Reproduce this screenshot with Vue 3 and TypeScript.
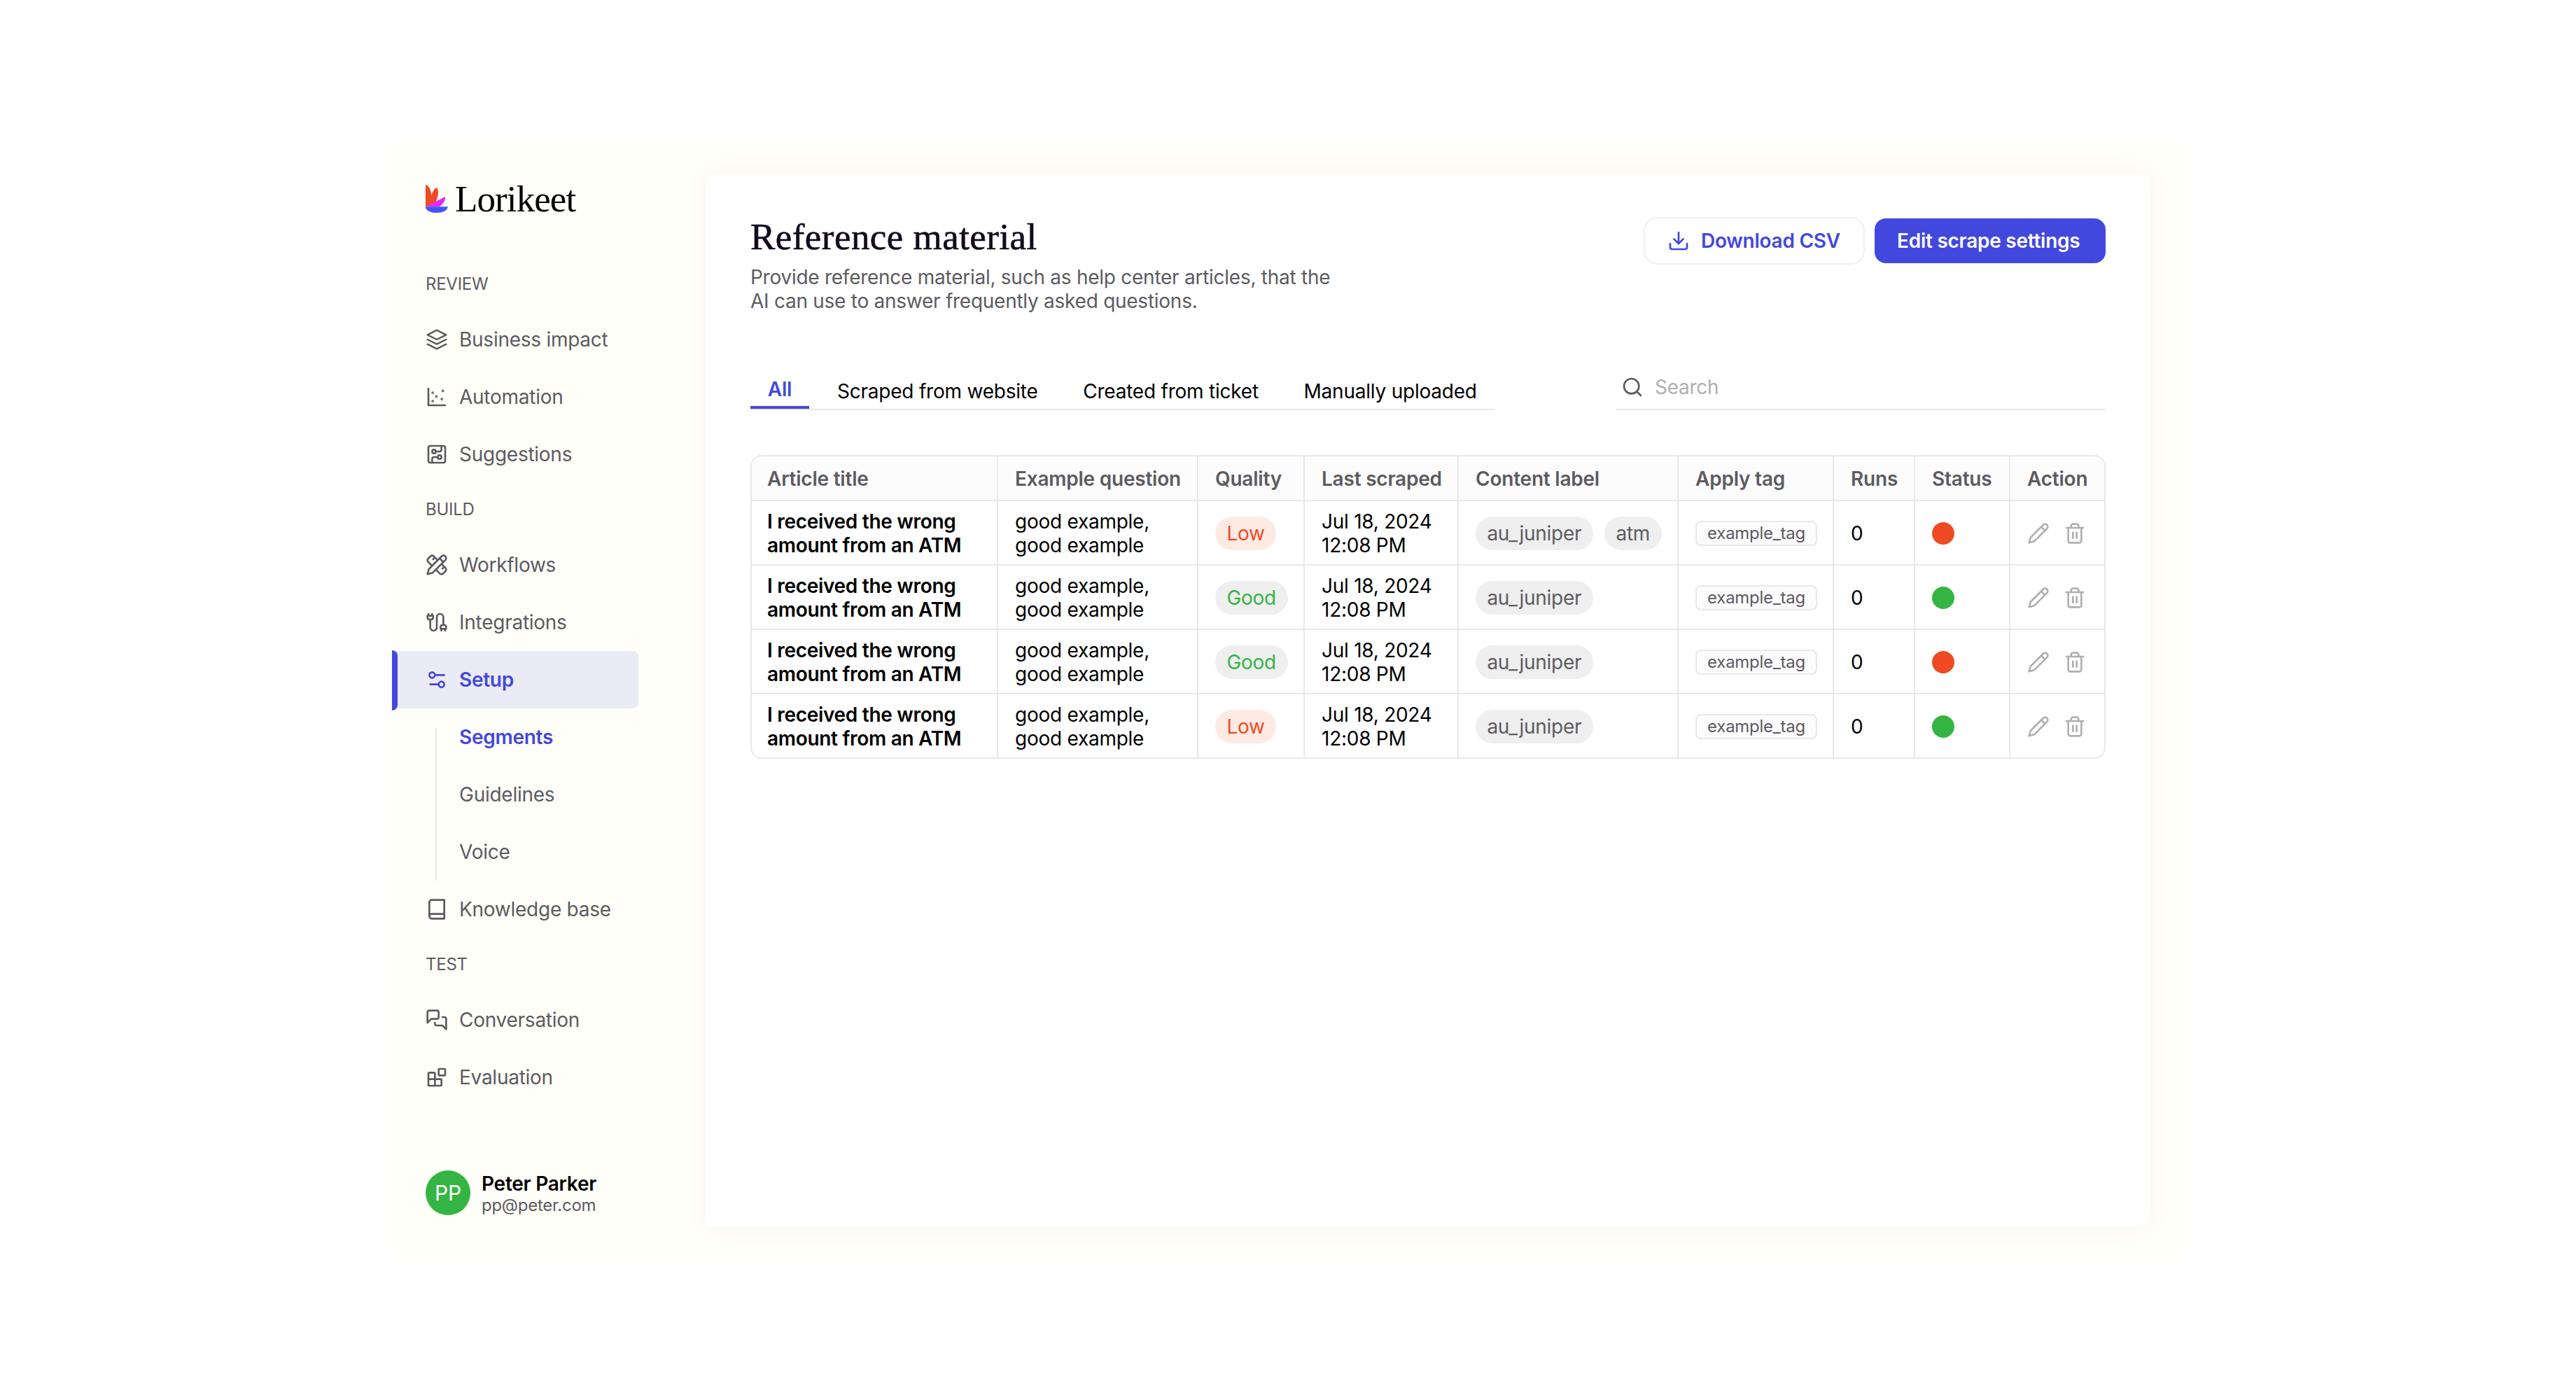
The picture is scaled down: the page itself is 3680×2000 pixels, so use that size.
<script setup lang="ts">
interface NavItem {
  label: string
  icon: string
  width?: number
  active?: boolean
  children?: { label: string; active?: boolean }[]
}

interface Row {
  title: string[]
  question: string[]
  quality: 'Low' | 'Good'
  scraped: string[]
  labels: string[]
  tag: string
  runs: number
  online: boolean
}

const icons: Record<string, string> = {
  layers: '<path d="M12 2 2 7l10 5 10-5-10-5Z"/><path d="m2 17 10 5 10-5"/><path d="m2 12 10 5 10-5"/>',
  scatter:
    '<path d="M3 3v18h18"/><g stroke-width="1"><circle cx="7.6" cy="7.5" r=".9"/><circle cx="18.5" cy="5.6" r=".9"/><circle cx="11.6" cy="11.5" r=".9"/><circle cx="7.6" cy="16.5" r=".9"/><circle cx="17.4" cy="14.4" r=".9"/></g>',
  circuit:
    '<rect x="3" y="3" width="18" height="18" rx="2"/><path d="M11 9h4a2 2 0 0 0 2-2V3"/><circle cx="9" cy="9" r="2"/><path d="M7 21v-4a2 2 0 0 1 2-2h4"/><circle cx="15" cy="15" r="2"/>',
  ruler:
    '<path d="m15 5 4 4"/><path d="M13 7 8.7 2.7a2.41 2.41 0 0 0-3.4 0L2.7 5.3a2.41 2.41 0 0 0 0 3.4L7 13"/><path d="m8 6 2-2"/><path d="m2 22 5.5-1.5L21.17 6.83a2.82 2.82 0 0 0-4-4L3.5 16.5Z"/><path d="m18 16 2-2"/><path d="m17 11 4.3 4.3c.94.94.94 2.46 0 3.4l-2.6 2.6c-.94.94-2.46.94-3.4 0L11 17"/>',
  cable:
    '<path d="M4 9a2 2 0 0 1-2-2V5h6v2a2 2 0 0 1-2 2Z"/><path d="M3 5V3"/><path d="M7 5V3"/><path d="M19 15V6.5a3.5 3.5 0 0 0-7 0v11a3.5 3.5 0 0 1-7 0V9"/><path d="M17 21v-2"/><path d="M21 21v-2"/><path d="M22 19h-6v-2a2 2 0 0 1 2-2h2a2 2 0 0 1 2 2Z"/>',
  sliders: '<path d="M20 7h-9"/><path d="M14 17H5"/><circle cx="17" cy="17" r="3"/><circle cx="7" cy="7" r="3"/>',
  book: '<path d="M4 19.5v-15A2.5 2.5 0 0 1 6.5 2H20v20H6.5a2.5 2.5 0 0 1 0-5H20"/>',
  messages:
    '<path d="M14 9a2 2 0 0 1-2 2H6l-4 4V4c0-1.1.9-2 2-2h8a2 2 0 0 1 2 2v5Z"/><path d="M18 9h2a2 2 0 0 1 2 2v11l-4-4h-6a2 2 0 0 1-2-2v-1"/>',
  blocks:
    '<rect width="7" height="7" x="14" y="3" rx="1"/><path d="M10 21V8a1 1 0 0 0-1-1H4a1 1 0 0 0-1 1v12a1 1 0 0 0 1 1h12a1 1 0 0 0 1-1v-5a1 1 0 0 0-1-1H3"/>',
  download: '<path d="M21 15v4a2 2 0 0 1-2 2H5a2 2 0 0 1-2-2v-4"/><path d="m7 10 5 5 5-5"/><path d="M12 15V3"/>',
  search: '<circle cx="11" cy="11" r="8"/><path d="m21 21-4.3-4.3"/>',
  pencil: '<path d="M17 3a2.85 2.83 0 1 1 4 4L7.5 20.5 2 22l1.5-5.5Z"/><path d="m15 5 4 4"/>',
  trash:
    '<path d="M3 6h18"/><path d="M19 6v14c0 1-1 2-2 2H7c-1 0-2-1-2-2V6"/><path d="M8 6V4c0-1 1-2 2-2h4c1 0 2 1 2 2v2"/><path d="M10 11v6"/><path d="M14 11v6"/>',
}

const sections: { title: string; items: NavItem[] }[] = [
  {
    title: 'REVIEW',
    items: [
      { label: 'Business impact', icon: 'layers', width: 1.8 },
      { label: 'Automation', icon: 'scatter' },
      { label: 'Suggestions', icon: 'circuit' },
    ],
  },
  {
    title: 'BUILD',
    items: [
      { label: 'Workflows', icon: 'ruler' },
      { label: 'Integrations', icon: 'cable' },
      {
        label: 'Setup',
        icon: 'sliders',
        active: true,
        children: [{ label: 'Segments', active: true }, { label: 'Guidelines' }, { label: 'Voice' }],
      },
      { label: 'Knowledge base', icon: 'book' },
    ],
  },
  {
    title: 'TEST',
    items: [
      { label: 'Conversation', icon: 'messages' },
      { label: 'Evaluation', icon: 'blocks' },
    ],
  },
]

const tabs = ['All', 'Scraped from website', 'Created from ticket', 'Manually uploaded']

const columns = [
  'Article title',
  'Example question',
  'Quality',
  'Last scraped',
  'Content label',
  'Apply tag',
  'Runs',
  'Status',
  'Action',
]

const makeRow = (quality: 'Low' | 'Good', labels: string[], online: boolean): Row => ({
  title: ['I received the wrong', 'amount from an ATM'],
  question: ['good example,', 'good example'],
  quality,
  scraped: ['Jul 18, 2024', '12:08 PM'],
  labels,
  tag: 'example_tag',
  runs: 0,
  online,
})

const rows: Row[] = [
  makeRow('Low', ['au_juniper', 'atm'], false),
  makeRow('Good', ['au_juniper'], true),
  makeRow('Good', ['au_juniper'], false),
  makeRow('Low', ['au_juniper'], true),
]
</script>

<template>
  <div class="stage">
    <div class="window">
      <aside class="sidebar">
        <div class="brand">
          <svg class="mark" viewBox="0 0 96 120">
            <path d="M0 0C13 2 23 20 25 46C29 32 38 15 47 12C57 20 57 48 43 74L0 94Z" fill="#f04923" />
            <path d="M0 94L84 51C86 70 72 86 58 94Z" fill="#e02bff" />
            <path d="M0 94H96C92 112 72 120 48 120C24 120 5 113 0 98Z" fill="#4154ff" />
          </svg>
          <span class="wordmark">Lorikeet</span>
        </div>

        <nav class="nav">
          <section v-for="section in sections" :key="section.title">
            <h2 class="section-title">{{ section.title }}</h2>
            <template v-for="item in section.items" :key="item.label">
              <a class="nav-item" :class="{ active: item.active }">
                <svg class="icon" viewBox="0 0 24 24" :stroke-width="item.width ?? 2" v-html="icons[item.icon]" />
                <span>{{ item.label }}</span>
              </a>
              <div v-if="item.children" class="subnav">
                <a v-for="child in item.children" :key="child.label" class="sub-item" :class="{ active: child.active }">
                  {{ child.label }}
                </a>
              </div>
            </template>
          </section>
        </nav>

        <div class="user">
          <div class="avatar">PP</div>
          <div class="identity">
            <div class="user-name">Peter Parker</div>
            <div class="user-mail">pp@peter.com</div>
          </div>
        </div>
      </aside>

      <main class="panel">
        <header class="head">
          <div>
            <h1 class="title">Reference material</h1>
            <p class="lead">
              Provide reference material, such as help center articles, that the<br />AI can use to answer frequently
              asked questions.
            </p>
          </div>
          <div class="actions">
            <button class="btn outline">
              <svg class="icon" viewBox="0 0 24 24" stroke-width="2" v-html="icons.download" />
              <span>Download CSV</span>
            </button>
            <button class="btn solid">Edit scrape settings</button>
          </div>
        </header>

        <div class="toolbar">
          <div class="tabs">
            <a v-for="(tab, i) in tabs" :key="tab" class="tab" :class="{ active: i === 0 }">
              <span>{{ tab }}</span>
            </a>
          </div>
          <div class="search">
            <svg class="icon" viewBox="0 0 24 24" stroke-width="2" v-html="icons.search" />
            <span>Search</span>
          </div>
        </div>

        <div class="table">
          <div class="tr th">
            <div v-for="column in columns" :key="column" class="td">{{ column }}</div>
          </div>
          <div v-for="(row, i) in rows" :key="i" class="tr">
            <div class="td strong">
              <div>
                <div v-for="line in row.title" :key="line">{{ line }}</div>
              </div>
            </div>
            <div class="td">
              <div>
                <div v-for="line in row.question" :key="line">{{ line }}</div>
              </div>
            </div>
            <div class="td">
              <span class="pill" :class="row.quality.toLowerCase()">{{ row.quality }}</span>
            </div>
            <div class="td">
              <div>
                <div v-for="line in row.scraped" :key="line">{{ line }}</div>
              </div>
            </div>
            <div class="td pills">
              <span v-for="label in row.labels" :key="label" class="pill">{{ label }}</span>
            </div>
            <div class="td"><span class="tag">{{ row.tag }}</span></div>
            <div class="td">{{ row.runs }}</div>
            <div class="td"><span class="dot" :class="{ online: row.online }" /></div>
            <div class="td tools">
              <svg class="icon" viewBox="0 0 24 24" stroke-width="2" v-html="icons.pencil" />
              <svg class="icon" viewBox="0 0 24 24" stroke-width="2" v-html="icons.trash" />
            </div>
          </div>
        </div>
      </main>
    </div>
  </div>
</template>

<style>
body {
  background: #fff;
}
</style>

<style scoped>
* {
  box-sizing: border-box;
}

.stage {
  width: 3680px;
  height: 2000px;
  padding: 200px 560px;
  background: #fff;
  font-family: Inter, 'Liberation Sans', sans-serif;
  font-size: 28px;
  line-height: 34px;
  letter-spacing: -0.26px;
  color: #000;
}

.window {
  display: flex;
  width: 2560px;
  height: 1600px;
  padding: 48px 48px 48px 0;
  background: #fffef9;
}

.icon {
  flex: none;
  width: 32px;
  height: 32px;
  fill: none;
  stroke: currentColor;
  stroke-linecap: round;
  stroke-linejoin: round;
}

.sidebar {
  display: flex;
  flex-direction: column;
  width: 448px;
  color: #5c5b61;
}

.brand {
  display: flex;
  align-items: flex-start;
  height: 120px;
  padding: 16px 0 0 48px;
}

.mark {
  width: 32px;
  height: 40px;
}

.wordmark {
  margin-left: 10px;
  font-family: 'Liberation Serif', serif;
  font-size: 53px;
  line-height: 41px;
  letter-spacing: -0.9px;
  color: #000;
}

.section-title {
  height: 76px;
  margin: 0;
  padding-left: 48px;
  font-size: 24px;
  font-weight: 400;
  line-height: 75px;
}

.nav-item {
  position: relative;
  display: flex;
  align-items: center;
  gap: 16px;
  width: 352px;
  height: 82px;
  padding-left: 48px;
}

.nav-item.active {
  border-radius: 0 8px 8px 0;
  background: #ebebf5;
  font-weight: 600;
  color: #4248de;
}

.nav-item.active::before {
  content: '';
  position: absolute;
  top: -1px;
  left: 0;
  width: 8px;
  height: 86px;
  border-radius: 0 8px 8px 0;
  background: #4248de;
}

.subnav {
  position: relative;
}

.subnav::before {
  content: '';
  position: absolute;
  top: 28px;
  left: 62px;
  width: 2px;
  height: 218px;
  background: #e6e6e6;
}

.sub-item {
  display: flex;
  align-items: center;
  height: 82px;
  padding-left: 96px;
}

.sub-item.active {
  font-weight: 600;
  color: #4248de;
}

.user {
  display: flex;
  gap: 16px;
  margin: auto 0 16px;
  padding-left: 48px;
}

.avatar {
  width: 64px;
  height: 64px;
  border-radius: 50%;
  background: #34b543;
  font-size: 30px;
  line-height: 65px;
  text-align: center;
  color: #fff;
}

.user-name {
  padding-top: 2px;
  font-weight: 600;
  color: #000;
}

.user-mail {
  font-size: 24px;
  line-height: 27px;
}

.panel {
  flex: 1;
  padding: 64px;
  border-radius: 16px 16px 16px 0;
  background: #fff;
  box-shadow: 0 0 40px rgba(0, 0, 0, 0.04);
}

.head {
  display: flex;
  justify-content: space-between;
  height: 216px;
}

.title {
  margin: 0;
  font-family: 'Liberation Serif', serif;
  font-size: 53px;
  font-weight: 400;
  line-height: 52px;
  letter-spacing: 0.45px;
  color: #120b1c;
  -webkit-text-stroke: 0.6px #120b1c;
}

.lead {
  margin: 15px 0 0;
  color: #5c5b61;
}

.actions {
  display: flex;
  align-items: flex-start;
  gap: 14px;
}

.btn {
  display: flex;
  align-items: center;
  justify-content: center;
  padding: 0;
  border: 0;
  font: inherit;
  font-weight: 600;
  letter-spacing: inherit;
}

.outline {
  justify-content: flex-start;
  width: 316px;
  height: 68px;
  margin-top: -2px;
  padding-left: 32px;
  gap: 16px;
  border: 2px solid #efefef;
  border-radius: 20px;
  background: #fff;
  color: #4248de;
}

.solid {
  justify-content: flex-start;
  width: 330px;
  height: 64px;
  padding-left: 32px;
  border-radius: 16px;
  background: #4248de;
  color: #fff;
}

.toolbar {
  display: flex;
  justify-content: space-between;
  height: 58px;
}

.tabs {
  display: flex;
  gap: 16px;
  border-bottom: 2px solid #e8e8e8;
}

.tab {
  display: flex;
  align-items: center;
  padding: 6px 24.6px 0 24px;
  letter-spacing: -0.22px;
}

.tab.active {
  justify-content: center;
  width: 84px;
  padding: 4px 0 0;
  border-radius: 4px 4px 0 0;
  border-bottom: 4px solid #4248de;
  font-weight: 600;
  color: #4248de;
}

.search {
  display: flex;
  align-items: center;
  gap: 16px;
  width: 700px;
  padding: 0 8px 6px;
  border-bottom: 2px solid #e8e8e8;
  color: #b0b0ae;
}

.search .icon {
  color: #5c5b61;
}

.table {
  margin-top: 64px;
  overflow: hidden;
  border: 2px solid #e8e8e8;
  border-radius: 16px;
}

.tr {
  display: grid;
  grid-template-columns: 352px 286px 152px 220px 314px 222px 116px 136px 134px;
  height: 92px;
  border-bottom: 2px solid #e8e8e8;
}

.tr:last-child {
  height: 90px;
  border-bottom: 0;
}

.td {
  display: flex;
  align-items: center;
  padding: 2px 0 0 24px;
  border-right: 2px solid #e8e8e8;
  white-space: nowrap;
}

.td:first-child {
  padding-left: 22px;
}

.td:last-child {
  border-right: 0;
}

.th {
  height: 64px;
  background: #fcfcfc;
  font-weight: 600;
  letter-spacing: -0.22px;
  color: #5c5b61;
}

.th .td {
  padding-top: 1px;
}

.strong {
  font-weight: 600;
  letter-spacing: -0.3px;
}

.pills {
  gap: 16px;
}

.pill {
  height: 48px;
  padding: 0 16.8px 0 16.4px;
  border-radius: 24px;
  background: #eeefee;
  line-height: 48px;
  color: #5c5b61;
}

.pill.low {
  background: #feeae3;
  color: #ef4a23;
}

.pill.good {
  color: #34b543;
}

.tag {
  width: 174px;
  height: 36px;
  border: 2px solid #e8e8e8;
  border-radius: 8px;
  background: #fcfcfc;
  font-size: 24px;
  line-height: 31px;
  text-align: center;
  color: #5c5b61;
}

.dot {
  width: 32px;
  height: 32px;
  border-radius: 50%;
  background: #ef4a23;
}

.dot.online {
  background: #34b543;
}

.tools {
  gap: 20px;
  color: #b0b0ae;
}
</style>
